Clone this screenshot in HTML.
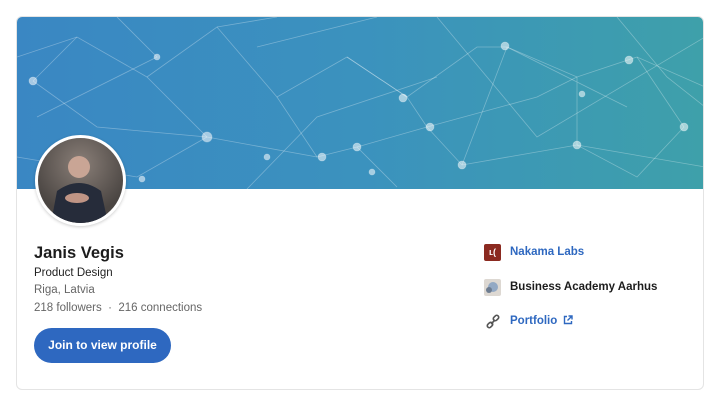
<!DOCTYPE html>
<html><head><meta charset="utf-8"><style>
body{margin:0;background:#fff;width:720px;height:406px;font-family:"Liberation Sans",sans-serif;overflow:hidden}
.card{position:absolute;left:16px;top:16px;width:686px;height:372px;border:1px solid #e4e4e4;border-radius:6px;overflow:hidden;background:#fff}
.banner{position:absolute;left:0;top:0;width:688px;height:172px;background:linear-gradient(90deg,#3a87c3 0%,#3b92be 50%,#3ea0aa 100%)}
.av{position:absolute;left:18px;top:118px;width:85px;height:85px;border-radius:50%;border:3px solid #fff;background:radial-gradient(circle at 50% 30%,#8a7f78,#4a4542 70%);overflow:hidden;box-shadow:0 1px 3px rgba(0,0,0,.2)}
.t{position:absolute;white-space:nowrap}
.btn{position:absolute;left:17px;top:311px;width:137px;height:35px;border-radius:18px;background:#2e68c0;color:#fff;font-weight:bold;font-size:12px;line-height:35px;text-align:center}
a{color:#2e68c0;text-decoration:none;font-weight:bold}
</style></head><body>
<div class="card">
<div class="banner"><svg width="688" height="172" stroke="rgba(255,255,255,.3)" stroke-width="0.8" fill="rgba(255,255,255,.55)">
<g fill="none">
<path d="M0 40 L60 20 L130 60 L200 10 L260 80 L330 40 L390 80 L460 30 L490 30 L560 60 L620 40 L688 70"/>
<path d="M16 64 L80 110 L190 120 L300 140 L340 130 L410 110 L445 148 L560 128 L620 160 L667 110"/>
<path d="M16 64 L60 20 M130 60 L190 120 M260 80 L300 140 M330 40 L390 80 L410 110 M490 30 L445 148 M560 60 L560 128 M620 40 L667 110 M490 30 L610 90"/>
<path d="M0 140 L120 160 L190 120 M340 130 L380 170 M560 128 L688 150 M200 10 L260 0 M410 110 L520 80 L560 60"/>
<path d="M100 0 L140 40 L20 100 M240 30 L360 0 M420 0 L520 120 L688 20 M600 0 L650 60 L688 90 M230 172 L300 100 L420 60"/>
</g>
<circle cx="16" cy="64" r="4"/><circle cx="190" cy="120" r="5"/><circle cx="125" cy="162" r="3"/><circle cx="305" cy="140" r="4"/><circle cx="340" cy="130" r="4"/><circle cx="386" cy="81" r="4"/><circle cx="413" cy="110" r="4"/><circle cx="445" cy="148" r="4"/><circle cx="488" cy="29" r="4"/><circle cx="560" cy="128" r="4"/><circle cx="612" cy="43" r="4"/><circle cx="667" cy="110" r="4"/><circle cx="565" cy="77" r="3"/><circle cx="355" cy="155" r="3"/><circle cx="250" cy="140" r="3"/><circle cx="140" cy="40" r="3"/></svg></div>
<div class="av"><svg width="85" height="85"><circle cx="41" cy="29" r="11" fill="#c9a595"/><path d="M13 85 L19 53 Q41 37 63 53 L70 85Z" fill="#262c3a"/><ellipse cx="39" cy="60" rx="12" ry="5" fill="#c09585"/></svg></div>
<div class="t" style="left:17px;top:227px;font-size:16.5px;font-weight:bold;color:#1c1c1c">Janis Vegis</div>
<div class="t" style="left:17px;top:250px;font-size:11.5px;color:#222">Product Design</div>
<div class="t" style="left:17px;top:267px;font-size:11.5px;color:#666">Riga, Latvia</div>
<div class="t" style="left:17px;top:285px;font-size:11.5px;color:#666">218 followers &nbsp;·&nbsp; 216 connections</div>
<div class="btn">Join to view profile</div>
<div style="position:absolute;left:467px;top:227px;width:17px;height:17px;background:#8b2a20;border-radius:2px;color:#fff;font-size:9px;font-weight:bold;line-height:17px;text-align:center">ʟ(</div>
<div class="t" style="left:493px;top:229px;font-size:11.5px"><a>Nakama Labs</a></div>
<div style="position:absolute;left:467px;top:262px;width:17px;height:17px;background:#ddd8d2;border-radius:2px"><div style="position:absolute;left:4px;top:3px;width:10px;height:10px;border-radius:50%;background:#93a9c4"></div><div style="position:absolute;left:2px;top:8px;width:6px;height:6px;border-radius:50%;background:#6d7c90"></div></div>
<div class="t" style="left:493px;top:264px;font-size:11.5px;font-weight:bold;color:#1c1c1c">Business Academy Aarhus</div>
<svg style="position:absolute;left:468px;top:297px" width="16" height="16" fill="none" stroke="#555" stroke-width="1.6"><rect x="8" y="2" width="6" height="4" rx="2" transform="rotate(-45 11 4)"/><rect x="2" y="9" width="6" height="4" rx="2" transform="rotate(-45 5 11)"/><path d="M6 10 L10 6"/></svg>
<div class="t" style="left:493px;top:298px;font-size:11.5px"><a>Portfolio</a></div>
<svg style="position:absolute;left:546px;top:298px" width="10" height="10" fill="none" stroke="#2e68c0" stroke-width="1.4"><path d="M4 1.5H1.5V8.5H8.5V6M5.5 1H9V4.5M9 1L4.5 5.5"/></svg>
</div>
</body></html>
